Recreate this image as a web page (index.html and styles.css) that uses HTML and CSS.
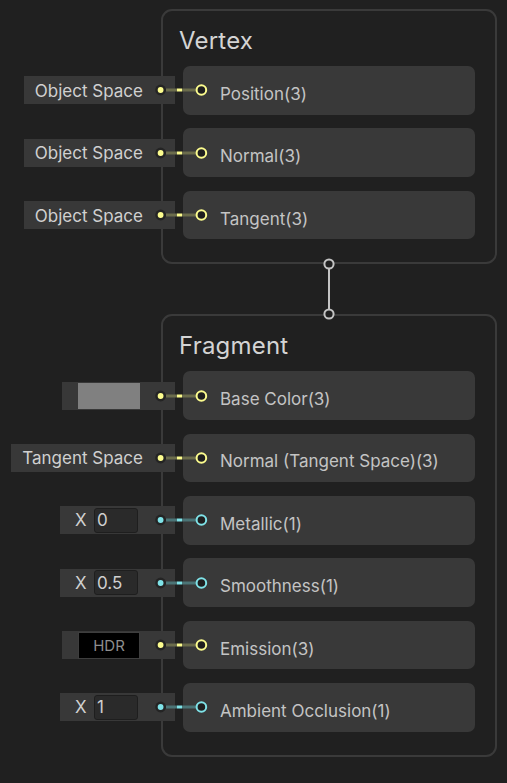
FILE: index.html
```html
<!DOCTYPE html>
<html>
<head>
<meta charset="utf-8">
<link rel="stylesheet" href="styles.css">
</head>
<body>
<div class="canvas">
  <section class="block">
    <h2 class="title">Vertex</h2>
    <div class="rows">
      <div class="row y">
        <div class="field text">Object Space</div>
        <div class="slot">Position(3)</div>
        <svg class="wire" width="60" height="20" viewBox="0 0 60 20"><circle class="hole" cx="10.6" cy="10" r="5.4"/><circle class="pip" cx="10.6" cy="10" r="2.9"/><line class="dim" x1="16" y1="10" x2="27" y2="10"/><line class="lit" x1="27" y1="10" x2="32" y2="10"/><line class="dim" x1="32" y1="10" x2="47" y2="10"/><circle class="port" cx="51.4" cy="10" r="4.8"/></svg>
      </div>
      <div class="row y">
        <div class="field text">Object Space</div>
        <div class="slot">Normal(3)</div>
        <svg class="wire" width="60" height="20" viewBox="0 0 60 20"><circle class="hole" cx="10.6" cy="10" r="5.4"/><circle class="pip" cx="10.6" cy="10" r="2.9"/><line class="dim" x1="16" y1="10" x2="27" y2="10"/><line class="lit" x1="27" y1="10" x2="32" y2="10"/><line class="dim" x1="32" y1="10" x2="47" y2="10"/><circle class="port" cx="51.4" cy="10" r="4.8"/></svg>
      </div>
      <div class="row y">
        <div class="field text">Object Space</div>
        <div class="slot">Tangent(3)</div>
        <svg class="wire" width="60" height="20" viewBox="0 0 60 20"><circle class="hole" cx="10.6" cy="10" r="5.4"/><circle class="pip" cx="10.6" cy="10" r="2.9"/><line class="dim" x1="16" y1="10" x2="27" y2="10"/><line class="lit" x1="27" y1="10" x2="32" y2="10"/><line class="dim" x1="32" y1="10" x2="47" y2="10"/><circle class="port" cx="51.4" cy="10" r="4.8"/></svg>
      </div>
    </div>
  </section>

  <svg class="link" width="14" height="62" viewBox="0 0 14 62"><line x1="7" y1="6" x2="7" y2="56"/><circle cx="7" cy="6" r="4.6"/><circle cx="7" cy="56" r="4.6"/></svg>

  <section class="block">
    <h2 class="title">Fragment</h2>
    <div class="rows">
      <div class="row y">
        <div class="field swatch-field"><span class="swatch grey"></span></div>
        <div class="slot">Base Color(3)</div>
        <svg class="wire" width="60" height="20" viewBox="0 0 60 20"><circle class="hole" cx="10.6" cy="10" r="5.4"/><circle class="pip" cx="10.6" cy="10" r="2.9"/><line class="dim" x1="16" y1="10" x2="27" y2="10"/><line class="lit" x1="27" y1="10" x2="32" y2="10"/><line class="dim" x1="32" y1="10" x2="47" y2="10"/><circle class="port" cx="51.4" cy="10" r="4.8"/></svg>
      </div>
      <div class="row y">
        <div class="field text">Tangent Space</div>
        <div class="slot">Normal (Tangent Space)(3)</div>
        <svg class="wire" width="60" height="20" viewBox="0 0 60 20"><circle class="hole" cx="10.6" cy="10" r="5.4"/><circle class="pip" cx="10.6" cy="10" r="2.9"/><line class="dim" x1="16" y1="10" x2="27" y2="10"/><line class="lit" x1="27" y1="10" x2="32" y2="10"/><line class="dim" x1="32" y1="10" x2="47" y2="10"/><circle class="port" cx="51.4" cy="10" r="4.8"/></svg>
      </div>
      <div class="row c">
        <div class="field num"><span class="axis">X</span><span class="input">0</span></div>
        <div class="slot">Metallic(1)</div>
        <svg class="wire" width="60" height="20" viewBox="0 0 60 20"><circle class="hole" cx="10.6" cy="10" r="5.4"/><circle class="pip" cx="10.6" cy="10" r="2.9"/><line class="dim" x1="16" y1="10" x2="27" y2="10"/><line class="lit" x1="27" y1="10" x2="32" y2="10"/><line class="dim" x1="32" y1="10" x2="47" y2="10"/><circle class="port" cx="51.4" cy="10" r="4.8"/></svg>
      </div>
      <div class="row c">
        <div class="field num"><span class="axis">X</span><span class="input">0.5</span></div>
        <div class="slot">Smoothness(1)</div>
        <svg class="wire" width="60" height="20" viewBox="0 0 60 20"><circle class="hole" cx="10.6" cy="10" r="5.4"/><circle class="pip" cx="10.6" cy="10" r="2.9"/><line class="dim" x1="16" y1="10" x2="27" y2="10"/><line class="lit" x1="27" y1="10" x2="32" y2="10"/><line class="dim" x1="32" y1="10" x2="47" y2="10"/><circle class="port" cx="51.4" cy="10" r="4.8"/></svg>
      </div>
      <div class="row y">
        <div class="field swatch-field"><span class="swatch hdr">HDR</span></div>
        <div class="slot">Emission(3)</div>
        <svg class="wire" width="60" height="20" viewBox="0 0 60 20"><circle class="hole" cx="10.6" cy="10" r="5.4"/><circle class="pip" cx="10.6" cy="10" r="2.9"/><line class="dim" x1="16" y1="10" x2="27" y2="10"/><line class="lit" x1="27" y1="10" x2="32" y2="10"/><line class="dim" x1="32" y1="10" x2="47" y2="10"/><circle class="port" cx="51.4" cy="10" r="4.8"/></svg>
      </div>
      <div class="row c">
        <div class="field num"><span class="axis">X</span><span class="input">1</span></div>
        <div class="slot">Ambient Occlusion(1)</div>
        <svg class="wire" width="60" height="20" viewBox="0 0 60 20"><circle class="hole" cx="10.6" cy="10" r="5.4"/><circle class="pip" cx="10.6" cy="10" r="2.9"/><line class="dim" x1="16" y1="10" x2="27" y2="10"/><line class="lit" x1="27" y1="10" x2="32" y2="10"/><line class="dim" x1="32" y1="10" x2="47" y2="10"/><circle class="port" cx="51.4" cy="10" r="4.8"/></svg>
      </div>
    </div>
  </section>
</div>
</body>
</html>
```

FILE: styles.css
```css
* { box-sizing: border-box; }
html, body {
  margin: 0;
  padding: 0;
  background: #202020;
  width: 507px;
  height: 783px;
  overflow: hidden;
}
body {
  font-family: Inter, "Noto Sans", sans-serif;
  color: #c8c8c8;
}
.canvas {
  padding: 9px 0 0 161px;
  display: flex;
  flex-direction: column;
  width: 497px;
}
.block {
  width: 336px;
  border: 2px solid #3a3a3a;
  border-radius: 11px;
  padding: 0 20px 23px 20px;
}
.title {
  margin: 0 0 0 -4px;
  padding-top: 15px;
  height: 55px;
  font-size: 24px;
  line-height: 29px;
  font-weight: 400;
  letter-spacing: 0.2px;
  color: #d4d4d4;
}
.rows {
  display: flex;
  flex-direction: column;
  gap: 13.9px;
}
.row {
  position: relative;
  display: flex;
  align-items: center;
  margin-left: -183px;
  height: 48.5px;
}
.field {
  margin-left: auto;
  margin-right: 8px;
  height: 28px;
  background: #383838;
  display: flex;
  align-items: center;
  font-size: 17px;
  color: #d0d0d0;
}
.field.text {
  padding: 1px 32px 0 11px;
}
.swatch-field {
  padding: 0 35px 0 16px;
}
.swatch {
  width: 62px;
  height: 26px;
  display: flex;
  align-items: center;
  justify-content: center;
}
.swatch.grey { background: #808080; }
.swatch.hdr {
  background: #000;
  color: #8e8e8e;
  font-size: 15px;
  border: 1px solid #3e3e3e;
  height: 27px;
}
.field.num {
  padding: 0 37px 0 15px;
}
.axis {
  width: 19px;
}
.input {
  width: 44px;
  height: 25px;
  background: #2a2a2a;
  border: 1px solid #1e1e1e;
  border-radius: 3px;
  padding-left: 2px;
  display: flex;
  align-items: center;
}
.slot {
  width: 292px;
  height: 100%;
  background: #393939;
  border-radius: 7px;
  display: flex;
  align-items: center;
  padding: 7px 0 0 37px;
  font-size: 17px;
  color: #c4c4c4;
}
.wire {
  position: absolute;
  left: 150px;
  top: calc(50% - 10px);
}
.wire .hole { fill: #242424; }
.wire line { stroke-width: 3; }
.wire .port { fill: #1f1f1f; stroke-width: 2; }
.row.y .pip { fill: #fcfc8e; }
.row.y .dim { stroke: #6b6c4c; }
.row.y .lit { stroke: #fcfc8e; }
.row.y .port { stroke: #fcfc8e; }
.row.c .pip { fill: #7fe3e8; }
.row.c .dim { stroke: #4b7476; }
.row.c .lit { stroke: #7fe3e8; }
.row.c .port { stroke: #7fe3e8; }
.link {
  display: block;
  position: relative;
  z-index: 1;
  margin: -6px 0 -6px 161px;
}
.link line { stroke: #c4c4c4; stroke-width: 2; }
.link circle { fill: #202020; stroke: #c4c4c4; stroke-width: 2; }
```
